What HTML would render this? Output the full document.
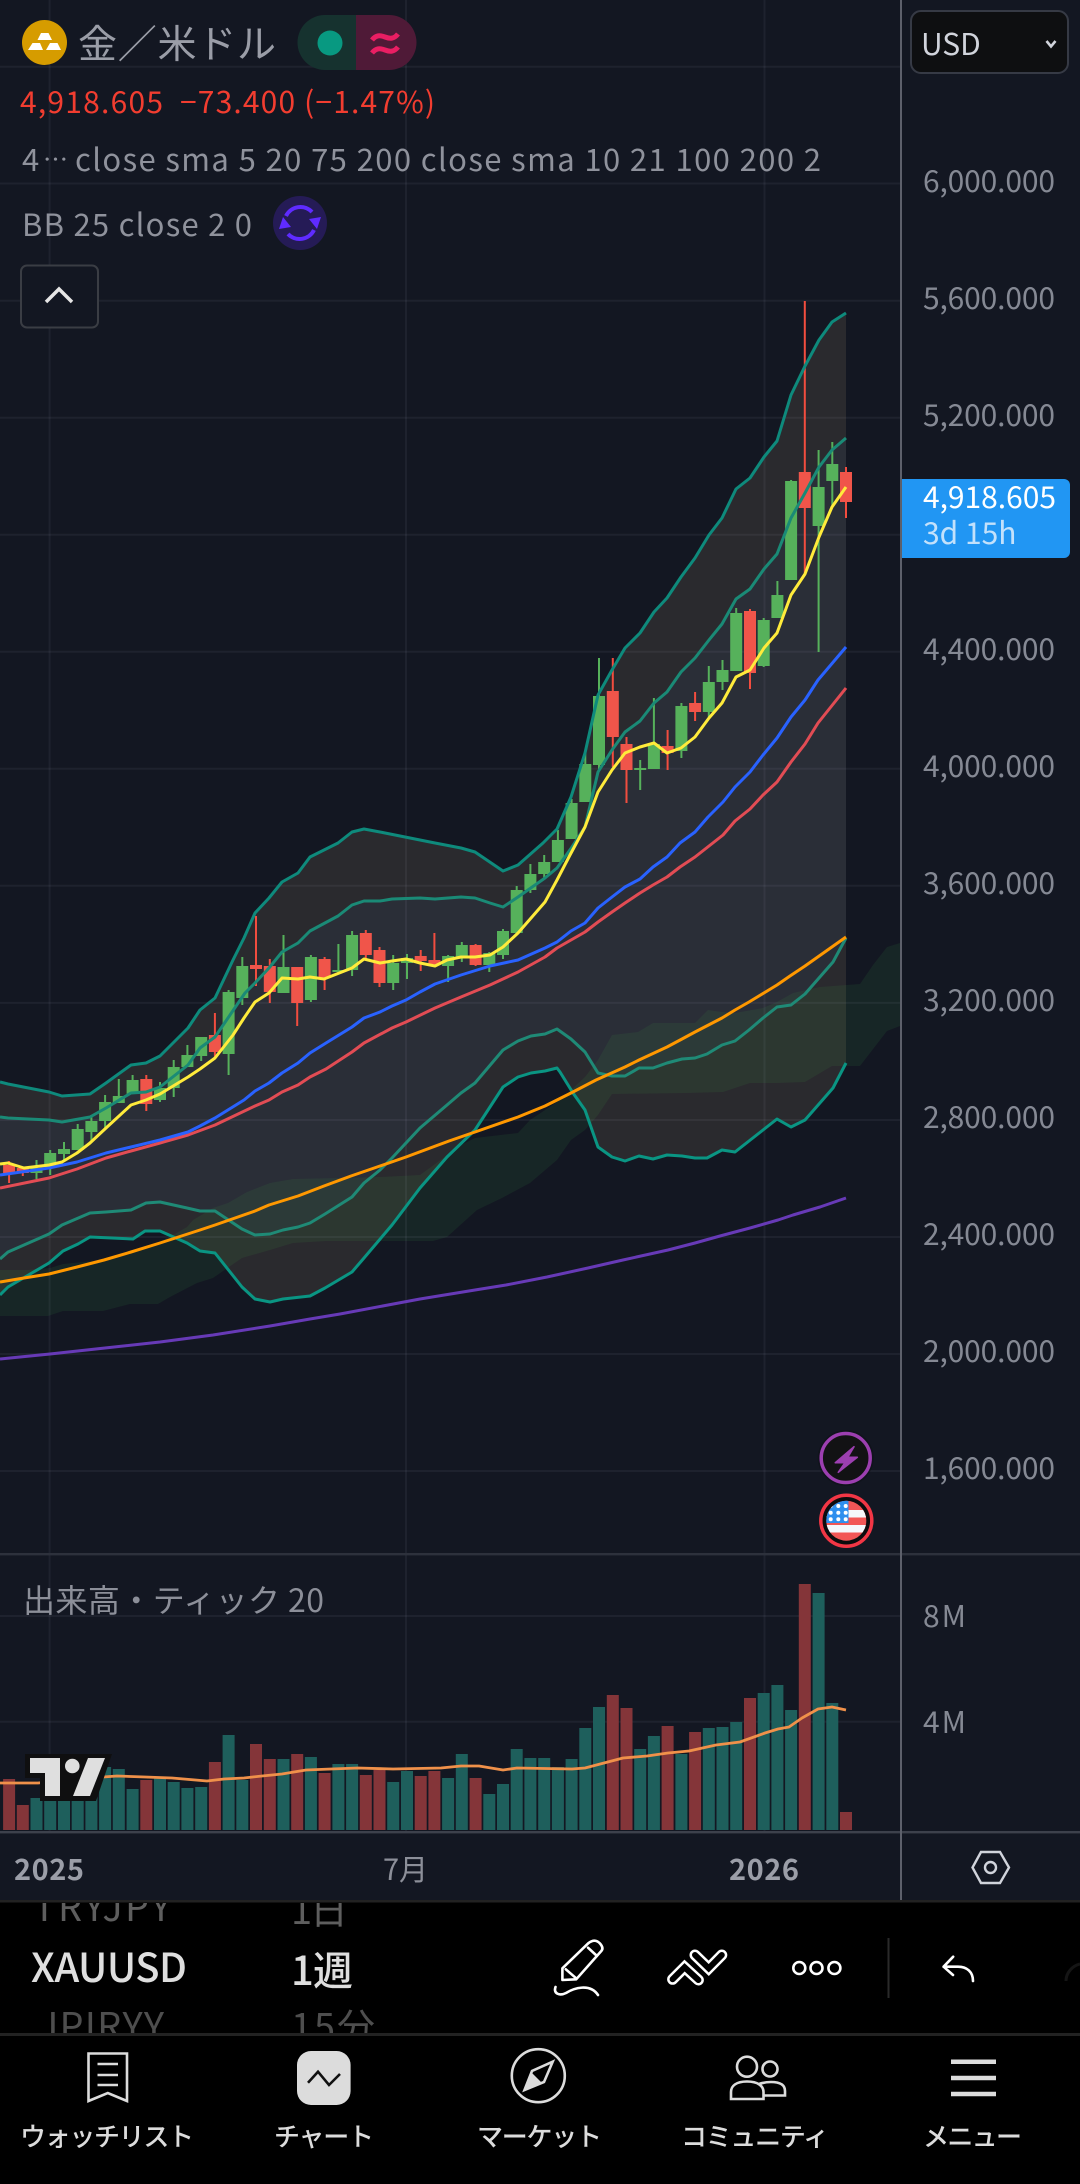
<!DOCTYPE html>
<html><head><meta charset="utf-8"><title>XAUUSD</title>
<style>
html,body{margin:0;padding:0;background:#000;width:1080px;height:2184px;overflow:hidden}
svg{display:block}
text{font-family:"Noto Sans CJK JP","Liberation Sans",sans-serif}
.p{font-size:30px;fill:#858994}
.n{font-size:26px;fill:#dcdcdc;font-weight:500}
.ln{fill:none;stroke-width:3;stroke-linejoin:round;stroke-linecap:butt}
.ic{fill:none;stroke:#fff;stroke-width:2.6;stroke-linecap:round;stroke-linejoin:round}
.nv{fill:none;stroke:#dcdcdc;stroke-width:2.6}
</style></head>
<body>
<svg xmlns="http://www.w3.org/2000/svg" width="1080" height="2184" viewBox="0 0 1080 2184">
<defs>
<clipPath id="cp"><rect x="0" y="0" width="901" height="1554"/></clipPath>
<clipPath id="fl"><circle cx="846.3" cy="1520.7" r="20"/></clipPath>
<clipPath id="wh"><rect x="0" y="1903" width="900" height="130"/></clipPath>
</defs>
<rect width="1080" height="1900" fill="#131722"/>

<g clip-path="url(#cp)">
<!-- band fills -->
<polygon fill="#2a2a2e" points="0,1082 8,1084 49,1092 62,1096 90,1094 106,1083 131,1065 146,1063 160,1056 188,1028 200,1010 215,998 233,960 244,938 255,913 269,898 282,882 298,873 310,857 338,843 352,832 364,829 380,832 420,840 435,843 461,848 475,852 503,871 518,865 543,843 557,829 571,797 585,753 598,695 612,670 625,648 640,633 654,612 667,598 681,577 695,558 709,535 722,518 736,489 750,478 764,457 777,441 791,395 805,366 819,340 832,322 846,313 846,1540 0,1540"/>
<polygon fill="#2a2e37" points="0,1117 8,1118 49,1120 62,1122 90,1117 106,1108 131,1093 146,1092 160,1087 188,1065 200,1048 215,1037 245,993 255,983 269,968 282,952 298,943 310,931 338,916 352,905 364,901 380,901 392,899 420,898 435,899 461,897 475,898 490,903 503,907 518,897 545,878 557,868 572,847 585,827 598,772 612,750 625,732 640,721 654,703 667,692 681,672 695,658 709,640 722,624 736,599 750,589 764,569 777,554 791,518 805,493 819,467 832,450 846,438 846,1540 0,1540"/>
<polygon fill="#2a2a2e" points="0,1259 8,1252 49,1234 62,1225 90,1213 106,1212 131,1210 146,1203 160,1202 187,1208 200,1211 215,1211 242,1229 255,1235 270,1234 283,1230 298,1227 310,1223 325,1214 352,1197 364,1183 380,1170 392,1158 420,1128 447,1105 461,1093 475,1083 503,1050 518,1041 531,1036 545,1034 557,1029 571,1039 585,1052 598,1073 612,1076 625,1076 639,1068 653,1068 667,1063 682,1059 695,1058 707,1054 722,1045 735,1041 749,1030 763,1018 777,1007 791,1005 805,994 833,962 846,938 846,1540 0,1540"/>
<polygon fill="#131722" points="0,1295 8,1287 49,1263 63,1251 78,1244 90,1237 133,1239 145,1231 160,1231 187,1243 200,1251 215,1253 242,1287 255,1299 270,1302 283,1299 310,1296 325,1288 352,1272 364,1258 392,1225 420,1188 447,1157 475,1130 503,1087 518,1077 531,1073 545,1071 557,1068 560,1072 573,1093 585,1110 598,1147 612,1157 625,1161 639,1156 653,1159 667,1155 682,1156 695,1158 707,1158 722,1150 735,1152 749,1141 763,1130 777,1119 791,1127 805,1120 833,1088 846,1063 846,1540 0,1540"/>
<!-- cloud -->
<polygon fill="rgba(67,160,71,.11)" points="0,1270 27,1270 50,1268 63,1264 103,1260 117,1257 153,1245 173,1235 187,1227 193,1220 213,1208 228,1203 247,1192 270,1183 293,1179 340,1178 380,1177 420,1175 461,1145 475,1138 518,1133 530,1120 557,1102 571,1090 585,1077 598,1060 612,1035 638,1032 653,1023 695,1023 708,1010 722,1012 735,1013 763,1008 777,1002 793,993 820,987 860,984 873,965 887,947 900,943 900,1026 887,1031 860,1066 832,1066 805,1082 777,1083 750,1083 723,1092 687,1093 612,1094 598,1115 585,1130 571,1140 557,1160 530,1183 502,1198 477,1210 447,1237 433,1241 326,1241 293,1243 270,1250 242,1258 213,1278 197,1283 170,1297 158,1304 130,1304 103,1311 63,1311 48,1316 0,1316"/>
</g>

<!-- grid -->
<g stroke="rgba(180,190,210,.07)" stroke-width="2" fill="none">
<path d="M0 66.7H901M0 183.5H901M0 300.7H901M0 417.7H901M0 534.7H901M0 651.7H901M0 768.7H901M0 885.8H901M0 1002.9H901M0 1120H901M0 1237H901M0 1354H901M0 1471H901M0 1616H901M0 1721.7H901"/>
<path d="M49.6 0V1832M406 0V1832M764.5 0V1832"/>
</g>

<!-- candles: wicks -->
<path fill="none" stroke="#56b15b" stroke-width="2" d="M832.3 442V507M818.6 450V652M791.1 480V580M777.4 581V618M763.7 618V667M736.2 608V671M722.5 660V690M708.8 666V717M681.4 703V758M653.9 698V769M640.2 760V790M599 658V769M585.3 752V802M571.6 799V838M557.9 830V862M544.2 855V878M530.4 864V893M516.7 886V935M503 929V959M489.3 952V972M461.8 942V962M448.1 955V982M407 954V979M393.2 955V990M352.1 931V976M338.4 944V973M310.9 955V1002M283.5 935V993M242.3 957V1005M228.6 990V1075M201.2 1037V1061M187.4 1045V1067M173.7 1060V1097M160 1082V1102M132.6 1075V1094M118.8 1079V1103M105.1 1095V1128M91.4 1115V1142M77.7 1124V1150M64 1142V1162M50.2 1150V1175M36.5 1160V1179"/>
<path fill="none" stroke="#f24d3f" stroke-width="2" d="M846 467V518M804.8 301V573M750 609V689M695.1 692V721M667.6 730V770M626.5 737V803M612.8 658V767M475.6 944V966M434.4 933V966M420.7 950V971M379.5 947V987M365.8 930V959M324.6 957V990M297.2 967V1026M269.8 959V1003M256 916V986M214.9 1013V1058M146.3 1075V1111M22.8 1168V1176M9.1 1161V1183"/>
<!-- candles: bodies -->
<path fill="none" stroke="#56b15b" stroke-width="12" d="M832.3 464V481M818.6 487V526M791.1 481V580M777.4 595V618M763.7 620V666M736.2 613V671M722.5 670V682M708.8 682V712M681.4 706V751M653.9 744V769M599 696V765M585.3 764V802M571.6 803V839M557.9 840V862M544.2 862V874M530.4 874V890M516.7 890V933M503 931V955M489.3 953V965M461.8 945V957M448.1 956V966M407 958V963M393.2 963V983M352.1 935V970M338.4 970V972M310.9 957V1000M283.5 967V993M242.3 966V998M228.6 992V1054M201.2 1037V1056M187.4 1055V1067M173.7 1067V1088M160 1088V1100M132.6 1080V1094M118.8 1096V1103M105.1 1102V1121M91.4 1121V1132M77.7 1129V1150M64 1149V1154M50.2 1153V1167M36.5 1168V1173M640.2 768V770"/>
<path fill="none" stroke="#f0554a" stroke-width="12" d="M846 472V502M804.8 472V508M750 611V673M695.1 703V712M667.6 746V753M626.5 744V770M612.8 691V737M475.6 945V965M434.4 960V964M420.7 956V961M379.5 950V983M365.8 933V955M324.6 959V978M297.2 967V1003M269.8 966V992M256 965V969M214.9 1035V1052M146.3 1079V1104M22.8 1168V1173M9.1 1165V1173"/>

<g clip-path="url(#cp)">
<!-- BB lines -->
<polyline class="ln" stroke="#0e8a7c" points="0,1082 8,1084 49,1092 62,1096 90,1094 106,1083 131,1065 146,1063 160,1056 188,1028 200,1010 215,998 233,960 244,938 255,913 269,898 282,882 298,873 310,857 338,843 352,832 364,829 380,832 420,840 435,843 461,848 475,852 503,871 518,865 543,843 557,829 571,797 585,753 598,695 612,670 625,648 640,633 654,612 667,598 681,577 695,558 709,535 722,518 736,489 750,478 764,457 777,441 791,395 805,366 819,340 832,322 846,313"/>
<polyline class="ln" stroke="#1a8a76" points="0,1117 8,1118 49,1120 62,1122 90,1117 106,1108 131,1093 146,1092 160,1087 188,1065 200,1048 215,1037 245,993 255,983 269,968 282,952 298,943 310,931 338,916 352,905 364,901 380,901 392,899 420,898 435,899 461,897 475,898 490,903 503,907 518,897 545,878 557,868 572,847 585,827 598,772 612,750 625,732 640,721 654,703 667,692 681,672 695,658 709,640 722,624 736,599 750,589 764,569 777,554 791,518 805,493 819,467 832,450 846,438"/>
<polyline class="ln" stroke="#1f8a76" points="0,1259 8,1252 49,1234 62,1225 90,1213 106,1212 131,1210 146,1203 160,1202 187,1208 200,1211 215,1211 242,1229 255,1235 270,1234 283,1230 298,1227 310,1223 325,1214 352,1197 364,1183 380,1170 392,1158 420,1128 447,1105 461,1093 475,1083 503,1050 518,1041 531,1036 545,1034 557,1029 571,1039 585,1052 598,1073 612,1076 625,1076 639,1068 653,1068 667,1063 682,1059 695,1058 707,1054 722,1045 735,1041 749,1030 763,1018 777,1007 791,1005 805,994 833,962 846,938"/>
<polyline class="ln" stroke="#0a9583" points="0,1295 8,1287 49,1263 63,1251 78,1244 90,1237 133,1239 145,1231 160,1231 187,1243 200,1251 215,1253 242,1287 255,1299 270,1302 283,1299 310,1296 325,1288 352,1272 364,1258 392,1225 420,1188 447,1157 475,1130 503,1087 518,1077 531,1073 545,1071 557,1068 560,1072 573,1093 585,1110 598,1147 612,1157 625,1161 639,1156 653,1159 667,1155 682,1156 695,1158 707,1158 722,1150 735,1152 749,1141 763,1130 777,1119 791,1127 805,1120 833,1088 846,1063"/>
<!-- purple -->
<polyline class="ln" stroke="#673ab7" points="0,1359 20,1357 50,1354 105,1348 160,1342 213,1335 270,1326 310,1319 340,1314 420,1299 475,1290 506,1285 547,1277 588,1268 623,1260 668,1250 695,1243 720,1236 735,1232 750,1228 778,1220 793,1215 820,1207 846,1198"/>
<!-- orange -->
<polyline class="ln" stroke="#ff9800" points="0,1282 24,1278 49,1274 77,1267 104,1260 131,1252 160,1243 200,1230 215,1225 255,1211 269,1205 298,1196 324,1186 351,1176 380,1166 406,1157 449,1141 475,1132 518,1117 545,1106 571,1093 596,1080 625,1067 639,1060 667,1047 682,1039 695,1032 722,1018 735,1010 749,1002 777,985 790,976 805,966 846,937"/>
<!-- red MA -->
<polyline class="ln" stroke="#e24c54" points="0,1188 49,1178 77,1169 106,1158 131,1151 160,1143 188,1135 215,1125 255,1106 269,1100 282,1092 298,1085 310,1077 326,1069 352,1052 364,1043 392,1028 406,1022 435,1008 461,997 490,985 518,972 545,957 557,948 571,940 585,932 598,922 612,912 625,903 640,893 653,885 667,877 680,867 695,857 723,835 735,821 750,809 763,795 777,782 791,762 805,744 818,723 846,688"/>
<!-- blue MA -->
<polyline class="ln" stroke="#2962ff" points="0,1175 49,1168 77,1162 106,1153 131,1147 160,1140 188,1132 200,1126 215,1118 244,1100 255,1091 269,1083 282,1073 298,1063 310,1053 326,1043 352,1027 364,1018 380,1012 392,1006 406,1000 420,992 435,984 461,975 490,966 518,960 545,948 557,942 571,931 585,923 598,908 612,897 625,887 640,879 653,867 667,857 680,843 695,832 708,817 723,802 735,787 750,772 763,755 777,738 791,717 805,700 818,680 846,647"/>
<!-- yellow -->
<polyline class="ln" stroke="#ffeb3b" points="0,1164 8,1163 24,1168 49,1165 62,1162 77,1153 90,1143 106,1128 131,1105 146,1100 160,1094 188,1077 200,1069 215,1058 233,1035 244,1018 255,1002 269,993 282,978 298,979 310,977 324,979 352,968 364,959 380,963 392,961 406,959 420,963 435,966 447,960 461,957 475,957 490,955 503,947 518,933 545,902 557,880 570,855 585,827 598,792 612,770 625,753 640,747 654,743 667,753 681,748 695,737 709,718 722,703 736,677 750,670 764,648 777,633 791,595 805,574 819,537 832,507 846,487"/>
</g>

<!-- volume -->
<path fill="none" stroke="#1e5f5c" stroke-width="12" d="M36.5 1798V1830M50.2 1786V1830M64 1781V1830M77.7 1782V1830M91.4 1778V1830M105.1 1767V1830M118.8 1769V1830M132.6 1789V1830M160 1778V1830M173.7 1782V1830M187.4 1788V1830M201.2 1787V1830M228.6 1735V1830M242.3 1780V1830M283.5 1759V1830M310.9 1757V1830M338.4 1764V1830M352.1 1764V1830M393.2 1782V1830M407 1771V1830M448.1 1778V1830M461.8 1754V1830M489.3 1794V1830M503 1784V1830M516.7 1749V1830M530.4 1758V1830M544.2 1758V1830M557.9 1767V1830M571.6 1759V1830M585.3 1728V1830M599 1707V1830M640.2 1749V1830M653.9 1736V1830M681.4 1754V1830M708.8 1728V1830M722.5 1727V1830M736.2 1722V1830M763.7 1693V1830M777.4 1685V1830M791.1 1710V1830M818.6 1593V1830M832.3 1703V1830"/>
<path fill="none" stroke="#843539" stroke-width="12" d="M9.1 1779V1830M22.8 1805V1830M146.3 1780V1830M214.9 1762V1830M256 1744V1830M269.8 1759V1830M297.2 1754V1830M324.6 1773V1830M365.8 1775V1830M379.5 1770V1830M420.7 1776V1830M434.4 1771V1830M475.6 1778V1830M612.8 1695V1830M626.5 1708V1830M667.6 1726V1830M695.1 1732V1830M750 1698V1830M804.8 1584V1830M846 1812V1830"/>
<polyline fill="none" stroke="#f0914a" stroke-width="2.8" stroke-linejoin="round" points="0,1783 38,1783 103,1777 117,1776 145,1777 172,1778 207,1781 224,1779 244,1778 262,1776 282,1774 306,1770 331,1769 358,1768 393,1769 441,1768 461,1766 479,1766 503,1770 517,1768 572,1769 585,1768 623,1758 647,1756 668,1753 689,1751 716,1745 740,1742 765,1733 778,1729 789,1727 802,1718 818,1709 832,1707 846,1710"/>

<!-- TV logo -->
<polygon fill="#0f0f10" points="25,1754 112,1754 96,1801 40,1801 40,1778 25,1778"/>
<polygon fill="#dfdfdf" points="30,1758 60,1758 60,1796 45,1796 45,1773 30,1773"/>
<circle cx="72.3" cy="1766" r="7.3" fill="#dfdfdf"/>
<polygon fill="#dfdfdf" points="88,1758 105,1758 90,1796 73,1796"/>

<!-- separators and axes -->
<rect x="0" y="1553" width="1080" height="2.4" fill="#2d313c"/>
<rect x="0" y="1831" width="1080" height="2.4" fill="#3d414c"/>
<rect x="900" y="0" width="2" height="1900" fill="#5d606b"/>

<!-- price axis -->
<g class="labels">
<text class="p" x="923" y="192" textLength="132">6,000.000</text>
<text class="p" x="923" y="309" textLength="132">5,600.000</text>
<text class="p" x="923" y="426" textLength="132">5,200.000</text>
<text class="p" x="923" y="660" textLength="132">4,400.000</text>
<text class="p" x="923" y="777" textLength="132">4,000.000</text>
<text class="p" x="923" y="894" textLength="132">3,600.000</text>
<text class="p" x="923" y="1011" textLength="132">3,200.000</text>
<text class="p" x="923" y="1128" textLength="132">2,800.000</text>
<text class="p" x="923" y="1245" textLength="132">2,400.000</text>
<text class="p" x="923" y="1362" textLength="132">2,000.000</text>
<text class="p" x="923" y="1479" textLength="132">1,600.000</text>
<text class="p" x="923" y="1627" textLength="43">8 M</text>
<text class="p" x="923" y="1733" textLength="43">4 M</text>
</g>
<path d="M902 479H1064a6 6 0 0 1 6 6V552a6 6 0 0 1-6 6H902Z" fill="#2196f3"/>
<text x="923" y="508" font-size="30" fill="#fff" textLength="133">4,918.605</text>
<text x="923" y="544" font-size="30" fill="#c3e1fb">3d 15h</text>

<!-- USD -->
<rect x="911" y="11" width="157" height="62" rx="10" fill="#0e0f11" stroke="#363a45" stroke-width="2"/>
<text x="921" y="55" font-size="30" fill="#d1d4dc">USD</text>
<polyline points="1046.500,41 1051,46.500 1055.500,41" fill="none" stroke="#d1d4dc" stroke-width="2.600"/>

<!-- header -->
<circle cx="44.5" cy="42.5" r="22.5" fill="#d69c00"/>
<polygon fill="#fff" points="41,33 48.5,33 52,40 37.5,40"/>
<polygon fill="#fff" points="32.5,43 40,43 43,50 28,50"/>
<polygon fill="#fff" points="50,43 57.5,43 61,50 46,50"/>
<text x="78" y="58" font-size="39" fill="#9a9da7" textLength="198">金／米ドル</text>
<path d="M356 15H325a27.500 27.500 0 0 0 0 55H356Z" fill="#16322f"/>
<path d="M356 15H389a27.500 27.500 0 0 1 0 55H356Z" fill="#4f1a37"/>
<circle cx="330" cy="43" r="12.500" fill="#089981"/>
<path d="M372 40c4-5 8-5 13-3s9 2 13-3M372 53c4-5 8-5 13-3s9 2 13-3" fill="none" stroke="#e91e63" stroke-width="5"/>

<text x="20" y="113" font-size="30" fill="#f23d30" textLength="143">4,918.605</text>
<text x="180" y="113" font-size="30" fill="#f23d30" textLength="255">−73.400 (−1.47%)</text>
<text x="22" y="171" font-size="31" fill="#8f929c">4</text>
<text x="43" y="168" font-size="24" fill="#8f929c" textLength="25" lengthAdjust="spacingAndGlyphs">⋯</text>
<text x="75" y="171" font-size="31" fill="#8f929c" textLength="746">close sma 5 20 75 200 close sma 10 21 100 200 2</text>
<text x="22" y="236" font-size="31" fill="#8f929c" textLength="230">BB 25 close 2 0</text>
<circle cx="300" cy="223" r="27" fill="#251b56"/>
<path d="M286 216A16 16 0 0 1 312 212M314 230A16 16 0 0 1 288 234" fill="none" stroke="#5f2bff" stroke-width="4"/>
<polygon fill="#5f2bff" points="309,219 321,217 317,229"/>
<polygon fill="#5f2bff" points="291,227 279,229 283,217"/>

<rect x="21" y="265.500" width="77" height="62" rx="6" fill="#131722" stroke="#3a3d44" stroke-width="2"/>
<polyline points="46,302 59,289 72,302" fill="none" stroke="#e6e6e6" stroke-width="3.500"/>

<!-- event icons -->
<circle cx="845.700" cy="1458" r="28" fill="#0d0f15" opacity=".5"/>
<circle cx="845.700" cy="1458" r="24.500" fill="#121214" stroke="#9c3fb0" stroke-width="3.500"/>
<polygon fill="#9c3fb0" stroke="#9c3fb0" stroke-width="1.600" stroke-linejoin="round" points="854,1446.700 835.300,1462.700 845,1462.700 838.300,1472.300 857.300,1457.300 847.700,1457.300"/>
<circle cx="846.300" cy="1520.700" r="25.500" fill="#0c0c0e" stroke="#f23645" stroke-width="3.500"/>
<g clip-path="url(#fl)">
<rect x="826" y="1500" width="42" height="42" fill="#f25656"/>
<rect x="826" y="1510" width="42" height="7.500" fill="#f5f7fb"/>
<rect x="826" y="1525" width="42" height="7.500" fill="#f5f7fb"/>
<rect x="826" y="1500" width="22.500" height="23" fill="#2f8fee"/>
<path d="M830.700 1506h.01M838.300 1506h.01M845.700 1506h.01M830.700 1512.700h.01M838.300 1512.700h.01M845.700 1512.700h.01M830.700 1519.300h.01M838.300 1519.300h.01M845.700 1519.300h.01" stroke="#fff" stroke-width="4" stroke-linecap="round"/>
</g>

<!-- volume title -->
<text x="23" y="1612" font-size="32" fill="#8c8f99" textLength="301">出来高・ティック 20</text>

<!-- time axis -->
<text x="14" y="1880" font-size="29" font-weight="700" fill="#9b9ea8" textLength="70">2025</text>
<text x="383" y="1880" font-size="29" fill="#8c8f99" textLength="45">7月</text>
<text x="729" y="1880" font-size="29" font-weight="700" fill="#9b9ea8" textLength="70">2026</text>
<polygon points="981,1852 1000,1852 1009,1867.500 1000,1883 981,1883 972.500,1867.500" fill="none" stroke="#d1d4dc" stroke-width="2.400"/>
<circle cx="990.500" cy="1867.500" r="5.500" fill="none" stroke="#d1d4dc" stroke-width="2.400"/>

<!-- bottom black -->
<rect x="0" y="1900" width="1080" height="284" fill="#000"/>
<rect x="0" y="1900" width="1080" height="2.500" fill="#222"/>
<g clip-path="url(#wh)">
<text x="33" y="1921" font-size="38" fill="#5e5e5e" textLength="138">TRYJPY</text>
<text x="291" y="1924" font-size="38" fill="#5e5e5e" textLength="57">1日</text>
<text x="38" y="2040" font-size="38" fill="#4e4e4e" textLength="126">JPIRYY</text>
<text x="291" y="2041" font-size="38" fill="#4e4e4e" textLength="84">15分</text>
</g>
<text x="31" y="1982" font-size="40" font-weight="500" fill="#dedede" textLength="156">XAUUSD</text>
<text x="291" y="1985" font-size="40" font-weight="500" fill="#dedede" textLength="62">1週</text>

<!-- toolbar icons -->
<path class="ic" d="M562.400 1968.300L588.200 1943.300Q595 1938 600 1943.500Q604 1948 601.300 1951L576.200 1979.300L562.400 1980ZM588 1947.700L597 1956M565.800 1969.300L576.200 1978.300"/>
<path class="ic" d="M555.500 1987C553 1994 560 1996 566 1993C574 1988 590 1983 598 1995"/>
<path d="M672.600 1979.300L684.600 1967.300L698.400 1980M695 1955L708.700 1968.300L721.800 1955" fill="none" stroke="#fff" stroke-width="11" stroke-linecap="round" stroke-linejoin="miter"/>
<path d="M672.600 1979.300L684.600 1967.300L698.400 1980M695 1955L708.700 1968.300L721.800 1955" fill="none" stroke="#000" stroke-width="6" stroke-linecap="round" stroke-linejoin="miter"/>
<circle cx="799.300" cy="1968" r="6" class="ic" stroke-width="3"/>
<circle cx="816.500" cy="1968" r="6" class="ic" stroke-width="3"/>
<circle cx="834.400" cy="1968" r="6" class="ic" stroke-width="3"/>
<rect x="887.500" y="1938" width="2" height="60" fill="#2a2a2a"/>
<path class="ic" d="M953.200 1956.700L943.600 1966.700L953 1975M943.600 1966.700H958C967 1966.700 973 1972 973 1981"/>
<path d="M1066 1981C1066 1973 1072 1966 1080 1964" fill="none" stroke="#151515" stroke-width="3"/>

<rect x="0" y="2033" width="1080" height="3" fill="#222"/>

<!-- nav icons -->
<path class="nv" d="M88.500 2053.500H127V2101L107.800 2093L88.500 2101Z"/>
<path class="nv" d="M97.500 2064H118M97.500 2075H118M97.500 2085H118"/>
<rect x="297" y="2051" width="53.600" height="54" rx="14" fill="#dcdcdc"/>
<polyline points="308,2082.700 318,2071.700 329,2085 340,2074" fill="none" stroke="#111" stroke-width="2.600"/>
<circle cx="538.300" cy="2075.700" r="26.500" class="nv"/>
<path class="nv" d="M552.700 2061.700L532 2071L524.500 2090L544 2082Z"/>
<polygon points="532,2073 524.500,2090 542,2083" fill="#dcdcdc"/>
<circle cx="747" cy="2066.700" r="10" class="nv"/>
<circle cx="770" cy="2069" r="7.500" class="nv"/>
<path class="nv" d="M731 2099V2092C731 2086 736 2081.500 747 2081.500C758 2081.500 763.500 2086 763.500 2092V2099Z"/>
<path class="nv" d="M763 2095.500H785V2091C785 2085 780 2082 771 2082C766 2082 762 2083 759 2084"/>
<path d="M951 2061.700H996M951 2078H996M951 2094H996" fill="none" stroke="#dcdcdc" stroke-width="4.500"/>

<!-- nav labels -->
<text class="n" x="20" y="2146" textLength="174">ウォッチリスト</text>
<text class="n" x="274" y="2146" textLength="100">チャート</text>
<text class="n" x="477" y="2146" textLength="125">マーケット</text>
<text class="n" x="681" y="2146" textLength="148">コミュニティ</text>
<text class="n" x="923" y="2146" textLength="99">メニュー</text>
</svg>
</body></html>
